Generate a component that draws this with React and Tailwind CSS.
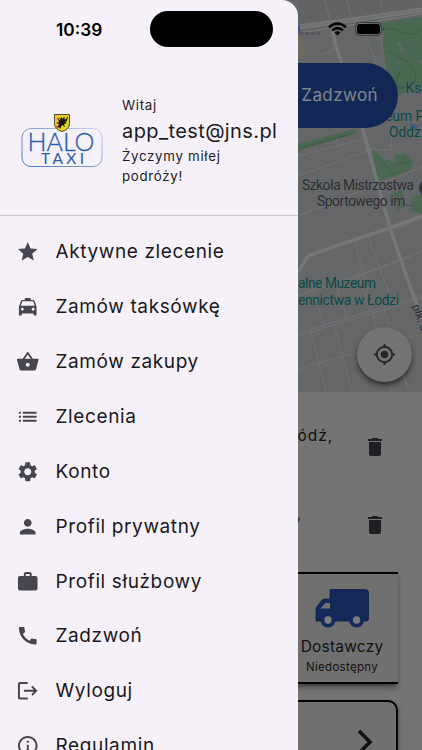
import {
  MdCall,
  MdDelete,
  MdInfoOutline,
  MdList,
  MdLocalTaxi,
  MdLogout,
  MdMyLocation,
  MdPerson,
  MdSettings,
  MdShoppingBasket,
  MdStar,
  MdWork,
} from "react-icons/md"

const menuItems = [
  { label: "Aktywne zlecenie", icon: MdStar },
  { label: "Zamów taksówkę", icon: MdLocalTaxi },
  { label: "Zamów zakupy", icon: MdShoppingBasket },
  { label: "Zlecenia", icon: MdList },
  { label: "Konto", icon: MdSettings },
  { label: "Profil prywatny", icon: MdPerson },
  { label: "Profil służbowy", icon: MdWork },
  { label: "Zadzwoń", icon: MdCall },
  { label: "Wyloguj", icon: MdLogout },
  { label: "Regulamin", icon: MdInfoOutline },
]

function CityMap() {
  return (
    <svg width="422" height="392" viewBox="0 0 422 392" className="block">
      <rect width="422" height="392" fill="#656668" />
      <path d="M298 0h124v18L298 34z" fill="#626365" />
      <path d="M298 37l3-1 5 17-4 6h-4z" fill="#6f6a5e" />

      {/* parks */}
      <g fill="#4a6751">
        <path d="M379 23l43-6v44l-7 1-10-5-5-15-13-1z" />
        <path d="M382 37l15 4 4 11 13 8 8 3v26l-27 6-9-28z" />
        <path d="M298 144l52-14h7l-2 4-57 17z" />
        <path d="M372 149l11 9 11 5 1-8 10-2 9 9-5 9-31 10z" />
        <path d="M393 193l9-3 4 17-9 3zM412 197l10-3v20l-11-3z" />
      </g>
      <path
        d="M384 30c10-8 20 12 38 0M388 50c8 8 20 8 26 20s-5 18-12 18-8-9 0-18M378 157l18 20M396 164l14-2M300 148l54-15"
        fill="none"
        stroke="#3b5a45"
        strokeWidth="1"
      />

      {/* side streets */}
      <g fill="none" stroke="#727375" strokeWidth="1">
        <path d="M298 176l75-27 18 1 1-18M298 216l124-49M298 156l70-18" />
        <path d="M325 0l5 20M347 0l4 17M380 0l3 14M379 23l4 32" />
        <path d="M298 333l124-38M298 336l124-38M298 369l124-35" />
        <path d="M345 282l77-31M298 296l60-21 52-18" />
        <path d="M355 240l37 152M368 236l24 66M311 331l15 61M334 325l18 67M312 285l12 40M333 275l14 44M357 270l13 42M384 309l24 80" />
        <path d="M395 229l27-11M380 268l42-17M320 55l20-8M360 22l24 60" />
      </g>
      <g fill="none" stroke="#6b6c6e" strokeWidth="0.8">
        <path d="M304 163l66-22M320 157l-4-14M340 150l-4-12M302 245l40-15 5 10M310 240l8 12M325 235l7 14M300 192l70-24M310 210l60-22" />
      </g>

      {/* main roads */}
      <g fill="none" stroke="#757678">
        <path d="M298 27l54-7 70-10" strokeWidth="5" />
        <path d="M298 33l54-8 70-11" strokeWidth="1.5" />
        <path d="M331 25l5 22 11 30 16 53 27 98 17 50 15 40" strokeWidth="3.500" />
        <path d="M298 272l10-16 25-9 57-19 32-12" strokeWidth="3.500" />
      </g>
      <path d="M299 27l54-7 69-10" fill="none" stroke="#68696b" strokeWidth="0.8" />

      {/* points of interest */}
      <path d="M410 123l7 3 1-4v9l-8-1z" fill="#3d5a82" />
      <circle cx="398" cy="67" r="2" fill="#44606f" />
      <circle cx="428" cy="188" r="9" fill="#2c3742" />
      <rect x="297" y="25" width="3" height="8" fill="#455684" />
      <path d="M300 33.5h21" stroke="#56575a" strokeWidth="3" strokeDasharray="3.5 2.2" />

      <g
        fontFamily="Roboto, sans-serif"
        fontSize="13.8"
        stroke="#6a6b6d"
        strokeWidth="1"
        paintOrder="stroke"
      >
        <g fill="#084845">
          <text x="405.500" y="93">Ksi</text>
          <text x="385" y="121">eum Pa</text>
          <text x="389" y="137">Oddz</text>
          <text x="298" y="288" textLength="78">alne Muzeum</text>
          <text x="298" y="304.500" textLength="101">ennictwa w Łodzi</text>
        </g>
        <g fill="#2b2d31">
          <text x="302" y="190" textLength="112">Szkoła Mistrzostwa</text>
          <text x="317" y="206" textLength="98">Sportowego im...</text>
          <text transform="translate(412 306) rotate(70)" fontSize="11.500">płk. Jana</text>
        </g>
      </g>
    </svg>
  )
}

function Truck() {
  return (
    <svg width="56" height="42" viewBox="0 0 56 42" className="mx-auto block">
      <path
        d="M16 2.500h35.500q3 0 3 3V32q0 2-3 2H2V21l6-8q1-1 3-1h5z"
        fill="#14295a"
        stroke="#101f43"
        strokeWidth="0.8"
      />
      <path d="M6.500 21.500l5-5.500H16v5.500z" fill="#747474" />
      <circle cx="14" cy="33" r="7.500" fill="#14295a" />
      <circle cx="42.500" cy="33" r="7.500" fill="#14295a" />
      <circle cx="14" cy="33" r="3.700" fill="#7b7b7b" />
      <circle cx="42.500" cy="33" r="3.700" fill="#7b7b7b" />
    </svg>
  )
}

function OrderScreen() {
  return (
    <main className="flex h-full flex-col bg-[#747474]">
      <div className="relative shrink-0">
        <CityMap />
        <button className="absolute top-[63px] right-6 h-[65px] w-44 rounded-full bg-[#132755] pr-5 text-right text-[17px] tracking-[0.4px] text-[#83868f]">
          Zadzwoń
        </button>
        <button className="absolute right-[10px] bottom-[10px] flex size-[55px] items-center justify-center rounded-full bg-[#737373] text-[#252427] shadow-md shadow-black/50">
          <MdMyLocation size={23} />
        </button>
      </div>

      <div className="flex shrink-0 flex-col pt-2 pr-[35px] text-[#111]">
        <div className="flex h-[78px] items-center justify-end pt-4">
          <span className="mr-[30px] pb-[22px] text-[15.500px] tracking-[0.9px]">Piotrkowska, Łódź,</span>
          <MdDelete size={24} className="text-[#1f1e23]" />
        </div>
        <div className="flex h-[78px] items-center justify-end pt-4">
          <span className="mr-[61px] pb-[22px] text-[15.500px] tracking-[0.9px]">Polska,</span>
          <MdDelete size={24} className="text-[#1f1e23]" />
        </div>
      </div>

      <div className="mt-4 flex shrink-0 flex-col items-end gap-4 pr-6 text-[#111]">
        <div className="h-[112px] w-[112px] border-y-2 border-black bg-[#707070] pt-[13px] text-center shadow-md shadow-black/40">
          <Truck />
          <div className="mt-[8px] text-[15.500px] leading-5 tracking-[0.2px]">Dostawczy</div>
          <div className="text-[11.500px] leading-5 tracking-[0.3px]">Niedostępny</div>
        </div>
        <div className="flex h-[84px] w-[374px] items-center justify-end rounded-[10px] border-2 border-black bg-[#707070] pr-[22px] shadow-md shadow-black/40">
          <span className="mr-[50px] pt-2">Wybierz...</span>
          <svg width="18" height="26" viewBox="0 0 18 26" fill="none" stroke="#111" strokeWidth="3.500">
            <path d="M3 2l11 11L3 24" />
          </svg>
        </div>
      </div>
    </main>
  )
}

function Logo() {
  return (
    <svg width="82" height="56" viewBox="0 0 82 56" className="shrink-0">
      <defs>
        <linearGradient id="frame" x1="0" x2="1" y1="1" y2="0">
          <stop offset="0" stopColor="#4f79bd" />
          <stop offset="0.6" stopColor="#8ba6d4" />
          <stop offset="1" stopColor="#cbd4ea" />
        </linearGradient>
      </defs>
      <rect x="1" y="16.500" width="80" height="38" rx="9" fill="none" stroke="url(#frame)" />
      <g fill="#2c5ba9" fontFamily="Lato, sans-serif">
        <text x="6.500" y="38.800" fontSize="25" fontWeight="300" stroke="#2c5ba9" strokeWidth="0.300" textLength="67" lengthAdjust="spacingAndGlyphs">HALO</text>
        <text x="20" y="51.800" fontSize="15.500" textLength="43">TAXI</text>
      </g>
      <path d="M33.500 2.500h15v9q0 6-7.500 8-7.500-2-7.500-8z" fill="#e8d229" stroke="#4d4934" />
      <path
        d="M40 5l2 2 1-3 1 4 3-4-1 5-2 1 2 1-3 1 1 3-3-2-2 4-1-2-2 1 2-4-3-1 3-1-1-3 2 1z"
        fill="#1b1912"
      />
      <path d="M36 7l3-1M35 14l2 2M38 10l-2 1" stroke="#c8402b" strokeWidth="1.200" />
    </svg>
  )
}

function Drawer() {
  return (
    <aside className="absolute inset-y-0 left-0 w-[298px] overflow-hidden rounded-tr-2xl bg-[#f6f1f9]">
      <header className="flex h-[216px] border-b border-[#c9c5cc] pl-[21px]">
        <div className="pt-[112px]">
          <Logo />
        </div>
        <div className="ml-[19px] w-[170px] pt-[95px] text-[13.300px] leading-5 tracking-[0.7px] text-[#1b1b1e]">
          <div>Witaj</div>
          <div className="pt-px text-[20px] leading-[30px] tracking-[0.4px]">app_test@jns.pl</div>
          <div className="w-28">Życzymy miłej podróży!</div>
        </div>
      </header>
      <nav className="pt-[8.500px]">
        {menuItems.map(({ label, icon: Icon }) => (
          <button key={label} className="flex h-[54.900px] w-full items-center gap-4 pl-4">
            <Icon size={23.5} className="text-[#47454d]" />
            <span className="pt-px text-[19px] tracking-[0.620px] whitespace-nowrap text-[#19181b]">{label}</span>
          </button>
        ))}
      </nav>
    </aside>
  )
}

function StatusBar() {
  return (
    <div className="absolute inset-x-0 top-0 flex h-[58px] items-center pl-14">
      <span className="w-[94px] pt-0.5 text-[17.300px] font-semibold text-black">10:39</span>
      <div className="h-9 w-[123px] rounded-full bg-black" />
      <svg width="19" height="14" viewBox="0 0 19 14" className="ml-[55px]" fill="none" stroke="#000" strokeWidth="2.500">
        <path d="M1 5.200q8.500-7.500 17 0M4 8.400q5.500-4.600 11 0" />
        <path d="M9.500 13.500l-3-3q3-2.500 6 0z" fill="#000" stroke="none" />
      </svg>
      <svg width="31" height="14" viewBox="0 0 31 14" className="ml-2">
        <rect x="0.500" y="0.500" width="26" height="13" rx="4" fill="none" stroke="#3b3b3c" />
        <rect x="2" y="2" width="23" height="10" rx="2.500" />
        <path d="M28 5q2 2 0 4z" fill="#3b3b3c" />
      </svg>
    </div>
  )
}

export default function App() {
  return (
    <div className="relative h-[750px] w-[422px] overflow-hidden font-['Inter',sans-serif]">
      <OrderScreen />
      <Drawer />
      <StatusBar />
    </div>
  )
}
